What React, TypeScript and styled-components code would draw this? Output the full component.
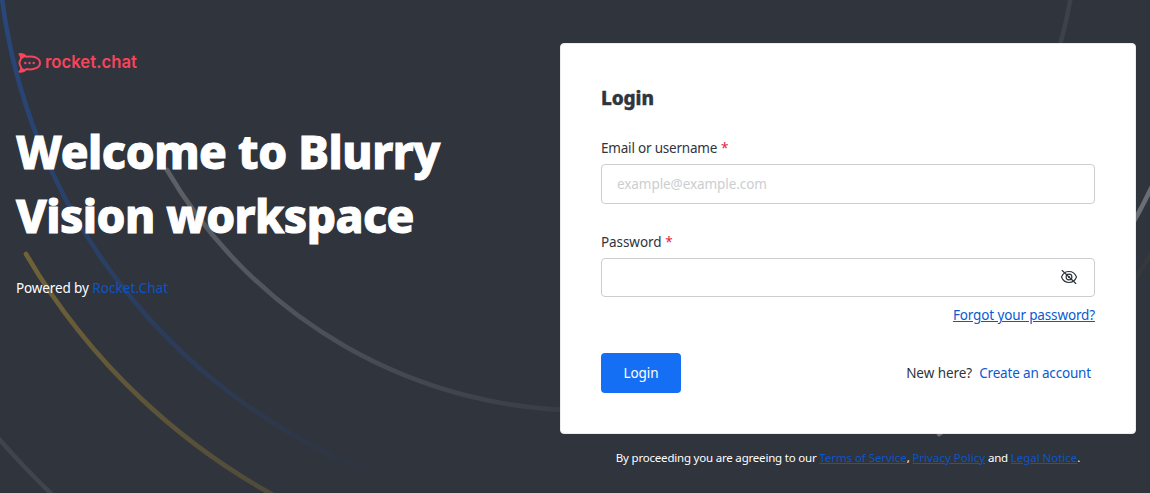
import React from 'react';
import styled, { createGlobalStyle } from 'styled-components';

const Global = createGlobalStyle`
  * { box-sizing: border-box; }
  html, body { margin: 0; padding: 0; overflow: hidden; }
  body { background: #2f343d; font-family: "Noto Sans", sans-serif; }
`;

const Page = styled.div`
  position: relative;
  width: 100%;
  height: 493px;
  overflow: hidden;
  display: flex;
  align-items: flex-start;
  justify-content: space-between;
  padding: 43px 14px 0 16px;
  background: #2f343d;
`;

const Arcs = styled.svg`
  position: absolute;
  inset: 0;
  width: 1150px;
  height: 493px;
`;

const Aside = styled.section`
  position: relative;
  width: 460px;
  color: #fff;
`;

const Logo = styled.svg`
  display: block;
  width: 130px;
  height: 36px;
`;

const LogoText = styled.text`
  font: 600 17.5px Inter, sans-serif;
  fill: #f5455c;
`;

const Heading = styled.h1`
  margin: 40px 0 0;
  font-size: 46px;
  line-height: 64px;
  font-weight: 800;
  white-space: nowrap;
  -webkit-text-stroke: 1px #fff;
`;

const Line = styled.span<{ $track: number }>`
  display: block;
  letter-spacing: ${(p) => p.$track}px;
`;

const Powered = styled.p`
  margin: 31px 0 0;
  font-size: 13.5px;
  line-height: 20px;
  letter-spacing: -0.12px;
`;

const Link = styled.a<{ $underline?: boolean; $bright?: boolean; $track?: number }>`
  color: ${(p) => (p.$bright ? '#095ad2' : '#0d54c4')};
  text-decoration: ${(p) => (p.$underline ? 'underline' : 'none')};
  letter-spacing: ${(p) => p.$track ?? -0.14}px;
`;

const Main = styled.main`
  position: relative;
  width: 576px;
`;

const Card = styled.form`
  height: 391px;
  padding: 40px 40px 0;
  border: 1px solid #ebecef;
  border-radius: 4px;
  background: #fff;
  color: #2f343d;
`;

const Title = styled.h2`
  margin: 0;
  font-size: 19px;
  line-height: 28px;
  font-weight: 800;
  letter-spacing: -0.1px;
  -webkit-text-stroke: 0.4px #2f343d;
`;

const Field = styled.div<{ $top: number }>`
  margin-top: ${(p) => p.$top}px;
`;

const Label = styled.label`
  display: block;
  margin-bottom: 6px;
  font-size: 13.5px;
  line-height: 20px;
  letter-spacing: -0.2px;
`;

const PasswordLabel = styled(Label)`
  letter-spacing: -0.08px;
`;

const Required = styled.span`
  margin-left: 0.5px;
  color: #e0213a;
`;

const Control = styled.div<{ $height: number }>`
  display: flex;
  align-items: center;
  height: ${(p) => p.$height}px;
  padding: 0 15px;
  border: 1px solid #cbced1;
  border-radius: 4px;
`;

const Input = styled.input`
  flex: 1;
  min-width: 0;
  padding: 0;
  border: 0;
  outline: 0;
  background: none;
  font: 13.5px/20px "Noto Sans", sans-serif;
  letter-spacing: -0.07px;
  &::placeholder { color: #cbced1; opacity: 1; }
`;

const EyeIcon = styled.svg`
  display: block;
  width: 20px;
  height: 20px;
  margin-top: -2px;
`;

const Forgot = styled.div`
  margin-top: 8px;
  text-align: right;
  font-size: 13.5px;
  line-height: 20px;
`;

const Actions = styled.div`
  display: flex;
  align-items: center;
  justify-content: space-between;
  margin-top: 28px;
  padding-right: 4px;
  font-size: 13.5px;
  line-height: 20px;
`;

const Button = styled.button`
  width: 80px;
  height: 40px;
  padding: 0;
  border: 0;
  border-radius: 4px;
  background: #156ff5;
  color: #fff;
  font: 13.5px/20px "Noto Sans", sans-serif;
  letter-spacing: -0.1px;
`;

const SignUp = styled.div`
  display: flex;
  gap: 7px;
  letter-spacing: -0.05px;
`;

const Legal = styled.footer`
  margin-top: 15px;
  text-align: center;
  color: #fff;
  font-size: 11.5px;
  line-height: 18px;
  white-space: nowrap;
  letter-spacing: -0.2px;
`;

const Background = () => (
  <Arcs viewBox="0 0 1150 493" fill="none" strokeWidth="4.6" strokeLinecap="round">
    <defs>
      <linearGradient id="gray" gradientUnits="userSpaceOnUse" x1="167" y1="170" x2="560" y2="410">
        <stop offset="0" stopColor="#5d6067" />
        <stop offset="1" stopColor="#393d46" />
      </linearGradient>
      <linearGradient id="blue" gradientUnits="userSpaceOnUse" x1="2" y1="0" x2="365" y2="470">
        <stop offset="0" stopColor="#28477b" />
        <stop offset="0.4" stopColor="#2a4068" />
        <stop offset="0.8" stopColor="#2d394f" />
        <stop offset="1" stopColor="#2f343f" />
      </linearGradient>
      <linearGradient id="yellow" gradientUnits="userSpaceOnUse" x1="26" y1="254" x2="272" y2="493">
        <stop offset="0" stopColor="#706237" />
        <stop offset="1" stopColor="#4f4a3a" />
      </linearGradient>
    </defs>
    <path d="M167 170A486.6 486.6 0 0 0 588 410.6" stroke="url(#gray)" />
    <path d="M1060.500 43.5A487 487 0 0 0 1071 -4" stroke="#3d4149" />
    <path d="M1.2 -8A590 590 0 0 0 365 470" stroke="url(#blue)" />
    <path d="M26 254A652 652 0 0 0 290 504" stroke="url(#yellow)" />
    <path d="M-6 433A782 782 0 0 0 60 502" stroke="#40444c" />
    <path d="M1157 175.500A621 621 0 0 1 939 434" stroke="#6a6d73" />
    <path d="M1155 247A652 652 0 0 1 1130 287" stroke="#36393b" />
  </Arcs>
);

const RocketLogo = () => (
  <Logo viewBox="0 0 130 36">
    <path
      d="M3.500 11.200c3-.6 5.300.6 6.900 2.600 7.700-1.400 13.600 1.600 13.600 6.100s-5.900 7.600-13.600 6.200c-1.600 1.900-3.900 3.100-6.900 2.600 1.700-1.700 2.100-3.200 1.400-4.700-1.700-2.300-1.700-5.600 0-8 .6-1.500.3-3-1.400-4.800Z"
      fill="none" stroke="#f5455c" strokeWidth="2" strokeLinejoin="round"
    />
    <path d="M2.500 10.500c3-.5 5.500.5 7.500 3.200l-4.600 2.300c.2-2-.7-3.600-2.900-5.500Z" fill="#f5455c" />
    <path d="M3 29c3.300.2 5.200-.8 7-2.700l-4.800-1.300c.2 1.600-.6 2.800-2.200 4Z" fill="#f5455c" />
    <circle cx="9.300" cy="20" r="1.200" fill="#f5455c" />
    <circle cx="13.500" cy="20" r="1.200" fill="#f5455c" />
    <circle cx="17.700" cy="20" r="1.200" fill="#f5455c" />
    <LogoText x="29" y="25" textLength="92" lengthAdjust="spacingAndGlyphs">rocket.chat</LogoText>
  </Logo>
);

const EyeOff = () => (
  <EyeIcon viewBox="0 0 20 20" fill="none" stroke="#2f343d" strokeWidth="1.150" strokeLinecap="round">
    <path d="M2.500 10c1.400-3.500 4.300-5.500 7.500-5.500s6.100 2 7.500 5.500c-1.400 3.500-4.300 5.500-7.500 5.500S3.900 13.500 2.500 10Z" />
    <circle cx="10" cy="10" r="2.900" />
    <circle cx="10" cy="10" r="0.500" />
    <path d="M3.200 3.500 16.800 16.500" />
  </EyeIcon>
);

export default function App() {
  return (
    <Page>
      <Global />
      <Background />
      <Aside>
        <RocketLogo />
        <Heading>
          <Line $track={-0.45}>Welcome to Blurry</Line>
          <Line $track={-0.56}>Vision workspace</Line>
        </Heading>
        <Powered>Powered by <Link $track={0.1}>Rocket.Chat</Link></Powered>
      </Aside>
      <Main>
        <Card>
          <Title>Login</Title>
          <Field $top={26}>
            <Label>Email or username <Required>*</Required></Label>
            <Control $height={40}><Input placeholder="example@example.com" /></Control>
          </Field>
          <Field $top={28}>
            <PasswordLabel>Password <Required>*</Required></PasswordLabel>
            <Control $height={39}><Input type="password" /><EyeOff /></Control>
          </Field>
          <Forgot><Link $underline $bright>Forgot your password?</Link></Forgot>
          <Actions>
            <Button type="button">Login</Button>
            <SignUp><span>New here?</span><Link $bright $track={-0.17}>Create an account</Link></SignUp>
          </Actions>
        </Card>
        <Legal>
          By proceeding you are agreeing to our <Link $underline $track={-0.06}>Terms of Service</Link>, <Link $underline $track={0.02}>Privacy Policy</Link> and <Link $underline $track={-0.03}>Legal Notice</Link>.
        </Legal>
      </Main>
    </Page>
  );
}
